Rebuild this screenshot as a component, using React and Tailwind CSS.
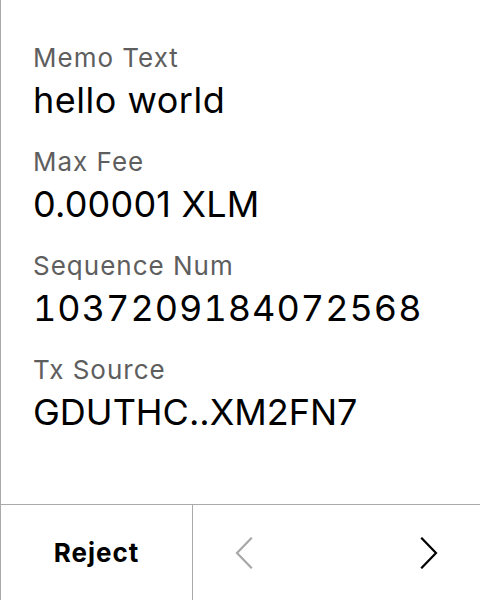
import React from 'react';

const rows = [
    { label: 'Memo Text', value: 'hello world', track: 'tracking-[0.5px]' },
    { label: 'Max Fee', value: '0.00001 XLM', track: 'tracking-[0.2px]' },
    { label: 'Sequence Num', value: '1037209184072568', track: 'tracking-[1px] tabular-nums' },
    { label: 'Tx Source', value: 'GDUTHC..XM2FN7', track: 'tracking-[0px]' },
];

const Chevron = ({ dir, color }) => (
    <svg width="18" height="32" viewBox="0 0 18 32" fill="none">
        <polyline
            points={dir === 'left' ? '16,1.5 2,16 16,30.5' : '2,1.5 16,16 2,30.5'}
            stroke={color}
            strokeWidth="2.2"
            strokeLinecap="square"
        />
    </svg>
);

const App = () => {
    return (
        <div className="w-[480px] h-[600px] bg-white border-l border-[#aaaaaa] flex flex-col" style={{ fontFamily: 'Inter, "Noto Sans", sans-serif' }}>
            {/* details */}
            <div className="flex-1 pl-[32px] pt-[41px] flex flex-col">
                {rows.map((r) => (
                    <div key={r.label} className="h-[104px]">
                        <div className="text-[26px] leading-[34px] tracking-[1px] text-[#5e5e5e]">{r.label}</div>
                        <div className={`text-[36px] leading-[46px] pt-[2px] text-black ${r.track}`}>{r.value}</div>
                    </div>
                ))}
            </div>

            {/* actions */}
            <div className="h-[96px] border-t border-[#aaaaaa] flex">
                <button className="w-[192px] border-r border-[#aaaaaa] flex items-center justify-center text-[26px] tracking-[1px] font-bold text-black">
                    Reject
                </button>
                <div className="flex-1 flex items-center justify-between px-[42px]">
                    <Chevron dir="left" color="#a8a8a8" />
                    <Chevron dir="right" color="#000000" />
                </div>
            </div>
        </div>
    );
};

export default App;
